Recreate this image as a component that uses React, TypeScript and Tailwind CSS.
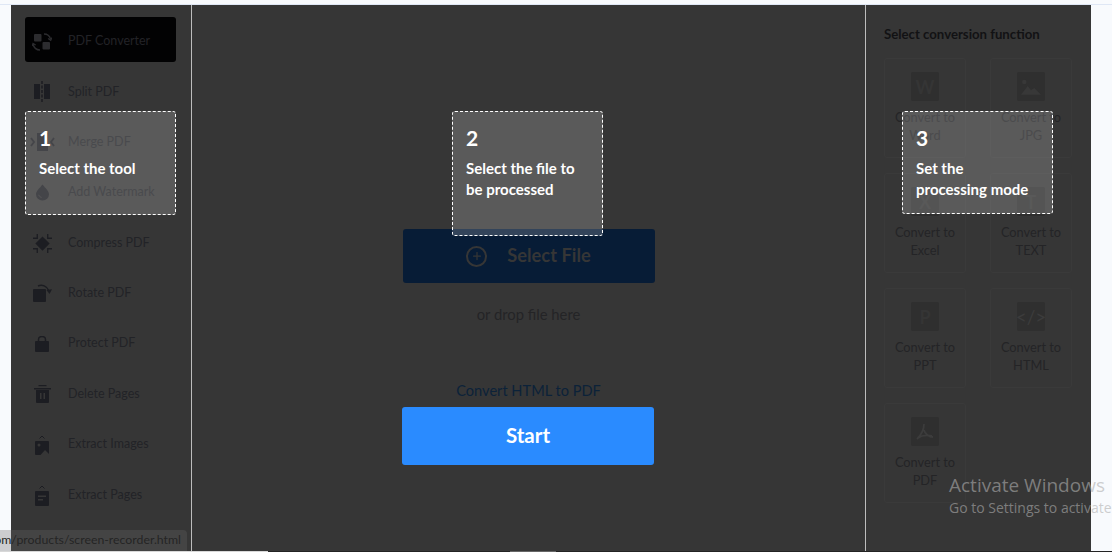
import { Plus } from 'lucide-react';
import type { ReactNode } from 'react';

const font = "font-['Lato','Open_Sans',sans-serif]";

const IconConvert = () => (
  <svg width="20" height="18" viewBox="0 0 20 18" fill="#2c2c2f">
    <rect x="2" y="1" width="7.500" height="7.500" rx="1" />
    <rect x="10.500" y="9" width="7.500" height="7.500" rx="1" />
    <path d="M12 1c3 0 5.500 1.500 6.500 5M1 11c.8 3.500 3.500 6 7 6" fill="none" stroke="#2c2c2f" strokeWidth="1.400" />
    <path d="M16 5.500l2.700 1.800L20 4.500M.2 13l.8-2.500 2.700 1.500" fill="none" stroke="#2c2c2f" strokeWidth="1.200" />
  </svg>
);

const IconSplit = () => (
  <svg width="16" height="21" viewBox="0 0 16 21" fill="#1c1d22">
    <rect x="0" y="3" width="6" height="15" />
    <rect x="10" y="3" width="6" height="15" />
    <path d="M8 0v21" stroke="#1c1d22" strokeWidth="1.500" strokeDasharray="3 1.500" fill="none" />
  </svg>
);

const IconMerge = () => (
  <svg width="25" height="20" viewBox="0 0 25 20" fill="#1c1d22">
    <rect x="7" y="1" width="11" height="18" />
    <path d="M1 6l3 4-3 4M24 6l-3 4 3 4" fill="none" stroke="#1c1d22" strokeWidth="1.800" />
  </svg>
);

const IconDrop = () => (
  <svg width="13" height="17" viewBox="0 0 14 17" fill="#1c1d22">
    <path d="M7 0c3 4 7 7 7 10.500a7 6.500 0 0 1-14 0C0 7 4 4 7 0z" />
    <path d="M3 11c.4 1.500 1.500 2.500 3 2.800" fill="none" stroke="#363636" strokeWidth="1" />
  </svg>
);

const IconCompress = () => (
  <svg width="19" height="19" viewBox="0 0 20 20" fill="#1c1d22">
    <path d="M10 2.500l7.500 7.500-7.500 7.500-7.500-7.500z" />
    <path d="M4.500 0v4.500H0M15.500 0v4.500H20M4.500 20v-4.500H0M15.500 20v-4.500H20" fill="none" stroke="#1c1d22" strokeWidth="1.400" />
  </svg>
);

const IconRotate = () => (
  <svg width="20" height="18" viewBox="0 0 20 18" fill="#1c1d22">
    <rect x="1" y="5" width="13" height="13" rx="1" />
    <path d="M6 2c4-2 9 0 11 5" fill="none" stroke="#1c1d22" strokeWidth="1.500" />
    <path d="M14.500 6l5.500-.8L17.500 10z" />
  </svg>
);

const IconLock = () => (
  <svg width="14" height="16" viewBox="0 0 14 16" fill="#1c1d22">
    <rect x="0" y="5" width="14" height="11" rx="1" />
    <path d="M3.500 6V3.500a3.500 3 0 0 1 7 0V6" fill="none" stroke="#1c1d22" strokeWidth="1.500" />
  </svg>
);

const IconTrash = () => (
  <svg width="17" height="18" viewBox="0 0 17 18" fill="#1c1d22">
    <rect x="4.500" y="0" width="8" height="1.200" />
    <rect x="0" y="3" width="17" height="1.500" />
    <path d="M2 5h13v12a1 1 0 0 1-1 1H3a1 1 0 0 1-1-1z" />
    <rect x="6" y="8" width="1.500" height="6" fill="#363636" />
    <rect x="9.500" y="8" width="1.500" height="6" fill="#363636" />
  </svg>
);

const IconImages = () => (
  <svg width="14" height="20" viewBox="0 0 14 20" fill="#1c1d22">
    <path d="M4.500 3.500L7 1l2.500 2.500" fill="none" stroke="#1c1d22" strokeWidth="1" />
    <rect x="0" y="6" width="14" height="14" rx="1" />
    <circle cx="4" cy="10" r="1.500" fill="#363636" />
    <path d="M5.500 20l4.500-5 4 4v1z" fill="#363636" />
  </svg>
);

const IconPages = () => (
  <svg width="14" height="21" viewBox="0 0 14 21" fill="#1c1d22">
    <path d="M4.500 3.500L7 1l2.500 2.500" fill="none" stroke="#1c1d22" strokeWidth="1" />
    <rect x="0" y="6" width="14" height="15" rx="1" />
    <rect x="3" y="10.500" width="8" height="1.500" fill="#363636" />
    <rect x="3" y="14" width="5" height="1.500" fill="#363636" />
  </svg>
);

const tools: { label: string; icon: ReactNode; active?: boolean }[] = [
  { label: 'PDF Converter', icon: <IconConvert />, active: true },
  { label: 'Split PDF', icon: <IconSplit /> },
  { label: 'Merge PDF', icon: <IconMerge /> },
  { label: 'Add Watermark', icon: <IconDrop /> },
  { label: 'Compress PDF', icon: <IconCompress /> },
  { label: 'Rotate PDF', icon: <IconRotate /> },
  { label: 'Protect PDF', icon: <IconLock /> },
  { label: 'Delete Pages', icon: <IconTrash /> },
  { label: 'Extract Images', icon: <IconImages /> },
  { label: 'Extract Pages', icon: <IconPages /> },
];

const glyph = 'text-[#353535] font-bold text-[18px]';

const functions: { line2: string; icon: ReactNode }[] = [
  { line2: 'Word', icon: <span className={glyph}>W</span> },
  {
    line2: 'JPG',
    icon: (
      <svg width="20" height="16" viewBox="0 0 18 14" fill="#383838">
        <path d="M0 14l6-8 3 4 3-2 6 6z" />
        <circle cx="3" cy="2.500" r="2" />
      </svg>
    ),
  },
  { line2: 'Excel', icon: <span className={glyph}>X</span> },
  { line2: 'TEXT', icon: <span className={glyph}>T</span> },
  { line2: 'PPT', icon: <span className={glyph}>P</span> },
  { line2: 'HTML', icon: <span className="text-[19px] text-[#3c3c3c]">&lt;/&gt;</span> },
  {
    line2: 'PDF',
    icon: (
      <svg width="18" height="18" viewBox="0 0 18 18" fill="none" stroke="#3c3c3c" strokeWidth="1.800">
        <path d="M8 1c0 5-3 11-7 15M8 7c1 4 5 7 9 7M2 15c4-3 9-3 14-2" />
      </svg>
    ),
  },
];

function Callout({ n, lines, className }: { n: number; lines: string[]; className: string }) {
  return (
    <div className={`absolute z-10 w-[151px] rounded-[3px] border border-dashed border-white bg-white/[.18] pl-[13px] pt-[12px] text-white ${className}`}>
      <div className="text-[21px] font-bold leading-[28px]">{n}</div>
      <div className="mt-[6px] text-[15px] font-bold leading-[21px]">
        {lines.map((l) => (
          <div key={l}>{l}</div>
        ))}
      </div>
    </div>
  );
}

export default function App() {
  return (
    <div className={`relative flex h-[552px] w-[1112px] flex-col overflow-hidden bg-[#f8fafd] ${font}`}>
      <div className="h-[5px] shrink-0 border-b border-[#dfe7f5]" />
      <div className="ml-[11px] flex h-[546px] w-[1080px] shrink-0 bg-[#363636]">
        {/* Left tool list */}
        <div className="flex w-[181px] shrink-0 flex-col gap-[5.400px] border-r border-[#bdbdbd] pl-[14px] pt-[12px]">
          {tools.map((t) => (
            <div
              key={t.label}
              className={`flex h-[45px] w-[151px] items-center rounded-[3px] pt-[4px] ${t.active ? 'bg-[#020203]' : ''}`}
            >
              <div className="mr-[9px] flex w-[34px] shrink-0 justify-center">{t.icon}</div>
              <span className="text-[12.500px] text-[#222327]">{t.label}</span>
            </div>
          ))}
        </div>

        {/* Center upload area */}
        <div className="flex w-[673px] shrink-0 flex-col items-center pt-[224px]">
          <div className="flex h-[54px] w-[252px] items-center justify-center gap-[20px] rounded-[3px] bg-[#071c36]">
            <div className="flex h-[21px] w-[21px] items-center justify-center rounded-full border-2 border-[#363636]">
              <Plus size={12} color="#363636" strokeWidth={2.500} />
            </div>
            <span className="text-[18.300px] font-bold text-[#363636]">Select File</span>
          </div>
          <div className="mt-[21px] text-[14.800px] leading-[20px] text-[#242426]">or drop file here</div>
          <div className="mt-[57px] text-[14.600px] leading-[20px] text-[#0c2239]">Convert HTML to PDF</div>
          <div className="mr-[1px] mt-[6px] flex h-[58px] w-[252px] items-center justify-center rounded-[3px] bg-[#2a8bff] pb-[2px] text-[20.500px] font-bold text-white">
            Start
          </div>
        </div>

        {/* Right function panel */}
        <div className="flex-1 border-l border-[#bdbdbd] pl-[18px] pt-[21px]">
          <div className="whitespace-nowrap text-[13.200px] font-bold leading-[16px] text-[#121214]">Select conversion function</div>
          <div className="mt-[16px] grid w-[190px] grid-cols-[82px_82px] gap-x-[24px] gap-y-[15px]">
            {functions.map((f) => (
              <div
                key={f.line2}
                className="flex h-[100px] flex-col items-center rounded-[3px] border border-[#3a3a3a] pt-[13px] text-[12.800px] leading-[18px] text-[#242426]"
              >
                <div className="mb-[7px] flex h-[29px] w-[28px] items-center justify-center rounded-[2px] bg-[#2f2f2f]">{f.icon}</div>
                <div>Convert to</div>
                <div>{f.line2}</div>
              </div>
            ))}
          </div>
        </div>
      </div>

      <Callout n={1} lines={['Select the tool']} className="left-[25px] top-[111px] h-[104px]" />
      <Callout n={2} lines={['Select the file to', 'be processed']} className="left-[452px] top-[111px] h-[125px]" />
      <Callout n={3} lines={['Set the', 'processing mode']} className="left-[902px] top-[111px] h-[103px]" />

      {/* Browser status link and OS watermark */}
      <div className="absolute bottom-[1px] left-0 z-20 flex h-[21px] w-[187px] items-center justify-end overflow-hidden rounded-tr-[4px] bg-[#676767]/30 pr-[6px] text-[12.300px] whitespace-nowrap text-[#252525]">
        om/products/screen-recorder.html
      </div>
      <div className="absolute left-[949px] top-[473px] z-20 whitespace-nowrap font-['Open_Sans',sans-serif] text-[#afafaf]/60">
        <div className="text-[19px] leading-[25px]">Activate Windows</div>
        <div className="text-[14px] leading-[20px]">Go to Settings to activate</div>
      </div>
      <div className="z-30 flex h-[1px] shrink-0">
        <div className="w-[268px] bg-[#d8d8d8]" />
        <div className="w-[242px] bg-[#232323]" />
        <div className="w-[46px] bg-[#666666]" />
        <div className="flex-1 bg-[#232323]" />
      </div>
    </div>
  );
}
